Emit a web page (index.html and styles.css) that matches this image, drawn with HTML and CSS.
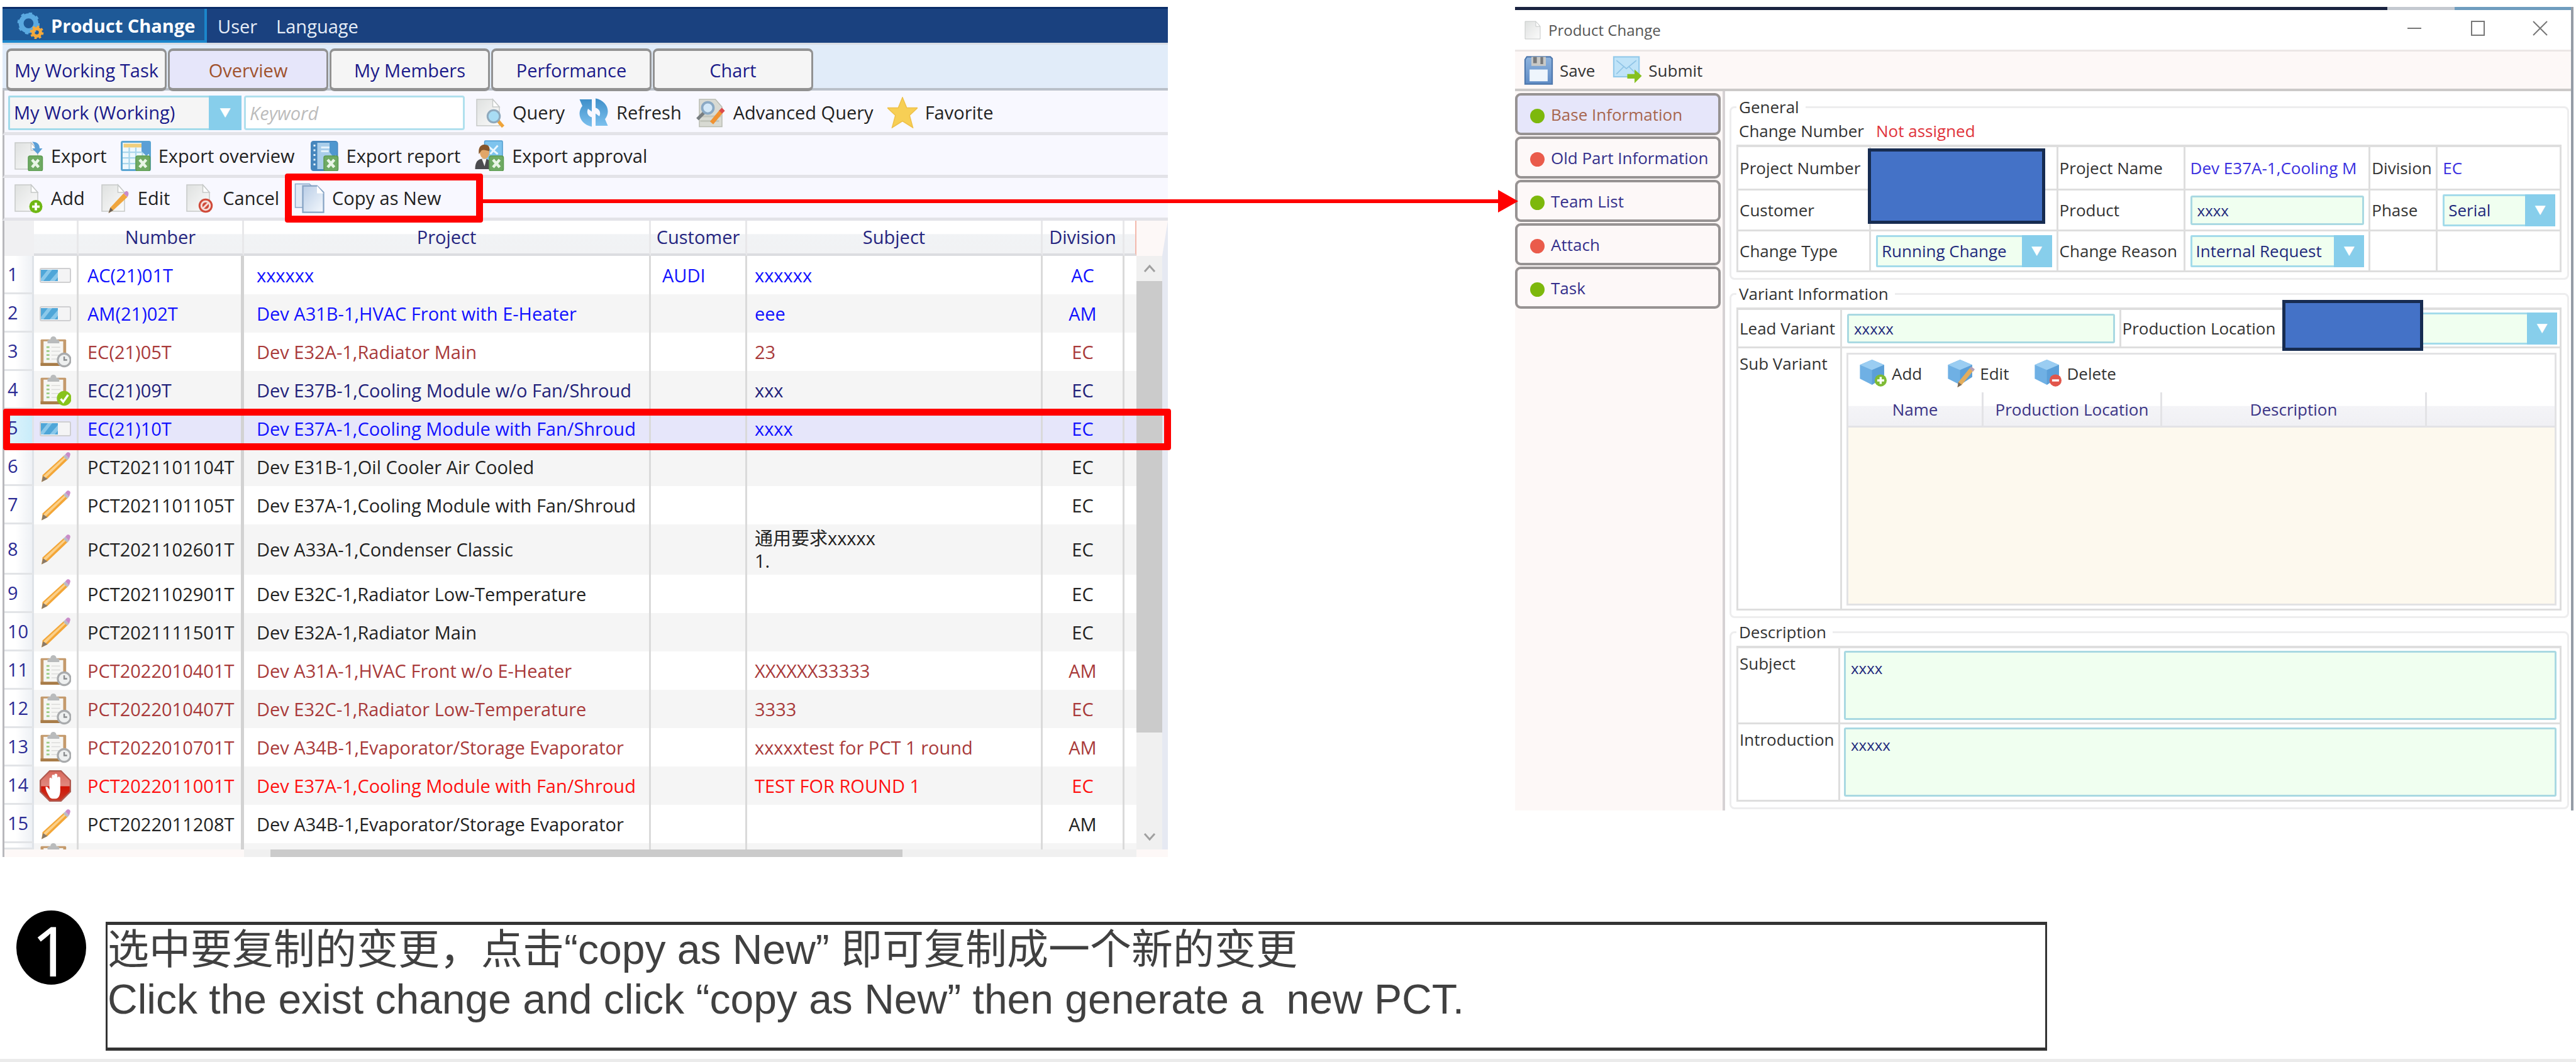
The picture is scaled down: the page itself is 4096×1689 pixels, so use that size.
FILE: index.html
```html
<!DOCTYPE html>
<html lang="en">
<head>
<meta charset="utf-8">
<title>Product Change - Copy as New</title>
<link rel="stylesheet" href="styles.css">
</head>
<body>
<svg class="sprite" aria-hidden="true">
  <defs>
    <linearGradient id="g-page" x1="0" y1="0" x2="1" y2="1"><stop offset="0" stop-color="#dfe1e0"/><stop offset="1" stop-color="#fbfbfb"/></linearGradient>
    <linearGradient id="g-blue" x1="0" y1="0" x2="0" y2="1"><stop offset="0" stop-color="#3f8fc9"/><stop offset="1" stop-color="#7cc0ee"/></linearGradient>
    <linearGradient id="g-copy" x1="0" y1="0" x2="1" y2="1"><stop offset="0" stop-color="#b9cde6"/><stop offset="1" stop-color="#f4f8fd"/></linearGradient>
    <linearGradient id="g-stop" x1="0" y1="0" x2="0" y2="1"><stop offset="0" stop-color="#d9695d"/><stop offset="0.5" stop-color="#e08a80"/><stop offset="0.52" stop-color="#d01405"/><stop offset="1" stop-color="#c83a28"/></linearGradient>
    <linearGradient id="g-floppy" x1="0" y1="0" x2="0" y2="1"><stop offset="0" stop-color="#8fb4de"/><stop offset="1" stop-color="#5f8cc6"/></linearGradient>
  </defs>
  <symbol id="page" viewBox="0 0 32 32"><path d="M2 2h17l7 8v20H2z" fill="url(#g-page)" stroke="#c6c9c8"/><path d="M19 2v8h7z" fill="#fff" stroke="#c6c9c8"/></symbol>
  <symbol id="xls" viewBox="0 0 32 32"><rect x="16" y="16" width="15" height="16" rx="2" fill="#6faa63" stroke="#5b9a50"/><path d="M20 20l7 8M27 20l-7 8" stroke="#e9f5e6" stroke-width="3"/></symbol>
  <symbol id="export" viewBox="0 0 32 32"><use href="#page"/><path d="M20 1c6 0 8 3 8 7h3l-5 6-6-6h3c0-3-1-5-3-7z" fill="#5b9fd6"/><use href="#xls"/></symbol>
  <symbol id="export-overview" viewBox="0 0 32 32"><rect x="1" y="1" width="30" height="30" rx="1" fill="#eef8fd" stroke="#5aa5d2" stroke-width="2"/><path d="M3 3h21v4H3z" fill="#f0cf7c"/><path d="M2 12h28M2 18h28M2 24h28M9 7v23M16 7v23M23 7v23" stroke="#a9d6ec" stroke-width="1.5"/><path d="M22 1h9v12l-4 3-5-5z" fill="#5b9fd6"/><use href="#xls"/></symbol>
  <symbol id="export-report" viewBox="0 0 32 32"><rect x="3" y="1" width="27" height="30" rx="2" fill="#a9cdea" stroke="#4686bd" stroke-width="2"/><path d="M3 1h6v30H3z" fill="#4686bd"/><path d="M5 5h2M5 10h2M5 15h2M5 20h2M5 25h2" stroke="#e4f1fa" stroke-width="2"/><path d="M13 7h11M13 11h8" stroke="#e4f1fa" stroke-width="2"/><path d="M22 1h8v13l-4 3-4-5z" fill="#4f97cf"/><use href="#xls"/></symbol>
  <symbol id="export-approval" viewBox="0 0 32 32"><rect x="11" y="0" width="19" height="24" rx="1" fill="#7ec4ee" stroke="#4f9ccf"/><path d="M15 6l10 8M25 5l-8 9" stroke="#eaf7ff" stroke-width="2"/><path d="M1 30c0-8 3-11 9-11s9 3 9 11z" fill="#4b4b4e"/><path d="M8 19h5l-2 8z" fill="#f2f2f2"/><ellipse cx="11" cy="12" rx="5" ry="7" fill="#e1a668"/><path d="M5 14c-1-7 2-10 6-10 5 0 6 4 5 7-3-1-6-2-8-1z" fill="#86562b"/><use href="#xls"/></symbol>
  <symbol id="query" viewBox="0 0 32 32"><use href="#page"/><path d="M24 24l6 7" stroke="#efa43a" stroke-width="3.5"/><circle cx="20" cy="20" r="6.5" fill="#a8dcf4" stroke="#8fa9bd" stroke-width="2"/></symbol>
  <symbol id="refresh" viewBox="0 0 32 32"><path d="M1 2h13v13l-4-3c-2 4 0 8 4 9v10C3 29-3 18 4 9z" fill="url(#g-blue)"/><path d="M31 30H18V17l4 3c2-4 0-8-4-9V1c11 2 17 13 10 22z" fill="url(#g-blue)"/></symbol>
  <symbol id="advanced" viewBox="0 0 32 32"><path d="M4 2h17l7 8v21H4z" fill="#d8dad3" stroke="#babdb4"/><path d="M5 20h22M5 25h20" stroke="#c3c6bd" stroke-width="2"/><path d="M10 15L2 23" stroke="#777d80" stroke-width="3.5"/><circle cx="13" cy="11" r="6" fill="#d3e8f8" stroke="#8aa9c4" stroke-width="2.5"/><path d="M17 27L27 15" stroke="#f09232" stroke-width="4.5"/><path d="M26.500 15.500l3-3" stroke="#dc4b4b" stroke-width="4.500"/></symbol>
  <symbol id="star" viewBox="0 0 32 32"><path d="M16 0l4.500 11H32l-8.500 8L27 32l-11-7-11 7 3.500-13L0 11h11.500z" fill="#f7cf55" stroke="#efc048"/></symbol>
  <symbol id="add" viewBox="0 0 32 32"><use href="#page"/><circle cx="24" cy="25" r="7" fill="#6fb714"/><path d="M24 21v8M20 25h8" stroke="#fff" stroke-width="2.500"/></symbol>
  <symbol id="pencil" viewBox="0 0 32 32"><path d="M3 24L25 4l4 4L8 28l-6 3z" fill="#f3a637"/><path d="M4 25L26 5l1 1.500L6 27z" fill="#fbd08a"/><path d="M2 31l1.500-6L8 28z" fill="#8a7a68"/><path d="M24 5l2-2 4 4-2 2z" fill="#b9bcc6"/><path d="M26 3l2-2c2-1 4 1 3 3l-1 3z" fill="#c98cc9"/></symbol>
  <symbol id="edit" viewBox="0 0 32 32"><use href="#page"/><path d="M11 26L25 11l4 4L14 29l-5 3z" fill="#f0a63e"/><path d="M9 32l2-6 3 3z" fill="#6d6258"/><path d="M25 11l2-2c2-1 4 1 3 4l-1 2z" fill="#c98cc9"/></symbol>
  <symbol id="cancel" viewBox="0 0 32 32"><use href="#page"/><circle cx="22" cy="24" r="7.500" fill="#d04a3a"/><circle cx="22" cy="24" r="4.500" fill="none" stroke="#f6dcd8" stroke-width="2"/><path d="M18.500 27.500l7-7" stroke="#f6dcd8" stroke-width="2"/></symbol>
  <symbol id="copy" viewBox="0 0 32 32"><path d="M1 1h15l5 5v20H1z" fill="#dfe9f5" stroke="#8ba8c9"/><path d="M9 3h15l7 7v21H9z" fill="url(#g-copy)" stroke="#86a3c4" stroke-width="1.500"/><path d="M24 3v8h7z" fill="#fff"/></symbol>
  <symbol id="progress" viewBox="0 0 50 26"><rect x="1" y="2" width="48" height="22" rx="2" fill="#f4f4f5" stroke="#cfcfd1" stroke-width="2"/><path d="M2 4h27v18H2z" fill="#4fa6d8"/><path d="M2 18L13 4h7L6 22H2zM16 22L29 7v9l-5 6z" fill="#8ac8ea"/></symbol>
  <symbol id="clipboard" viewBox="0 0 32 32"><rect x="1" y="3" width="26" height="27" rx="1" fill="#c49a6c"/><path d="M1 27h26v3H1z" fill="#a87c48"/><rect x="4" y="5" width="20" height="22" fill="#f6f6f4"/><path d="M7 11h3M7 15h3M7 19h3M7 23h3" stroke="#9ccc84" stroke-width="1.800"/><path d="M12 11h9M12 15h9M12 19h9M12 23h6" stroke="#dcdcda"/><path d="M8 7V4l3-1a3 3 0 0 1 6 0l3 1v3z" fill="#b9bbbc"/></symbol>
  <symbol id="waiting" viewBox="0 0 32 32"><use href="#clipboard"/><circle cx="25" cy="24" r="6.500" fill="#eef0f0" stroke="#a9abad" stroke-width="2"/><path d="M25 20.500V24h3" stroke="#8b8d8f" fill="none" stroke-width="1.500"/></symbol>
  <symbol id="done" viewBox="0 0 32 32"><use href="#clipboard"/><circle cx="25" cy="24" r="7.500" fill="#87c31c"/><path d="M21.500 24.500l2.500 3 5-7" fill="none" stroke="#fff" stroke-width="2.200"/></symbol>
  <symbol id="stop" viewBox="0 0 32 32"><path d="M10 0h12l10 10v12L22 32H10L0 22V10z" fill="#b05a50"/><path d="M10.500 1.500h11l9 9v11l-9 9h-11l-9-9v-11z" fill="url(#g-stop)"/><path d="M10 27c-2-3-4-7-4-10 2-1 3 1 4 3V9c0-2 2-2 2.500 0V6c0-2 2.500-2 2.500 0v-1c0-2 3-2 3 0v3c0-2 3-2 3 0v12c0 4-1 9-5 9-3 0-5 0-6-2z" fill="#fff"/></symbol>
  <symbol id="gears" viewBox="0 0 32 32"><circle cx="14" cy="13" r="9" fill="none" stroke="#5aa9e0" stroke-width="6"/><circle cx="14" cy="13" r="12" fill="none" stroke="#5aa9e0" stroke-width="3" stroke-dasharray="4 5.400"/><circle cx="24" cy="24" r="4.500" fill="none" stroke="#f4a93c" stroke-width="4"/><circle cx="24" cy="24" r="7" fill="none" stroke="#f4a93c" stroke-width="2.500" stroke-dasharray="2.800 2.700"/></symbol>
  <symbol id="save" viewBox="0 0 32 32"><path d="M3 1h26l2 2v28H1V4z" fill="url(#g-floppy)" stroke="#4f78ad" stroke-width="1.500"/><path d="M8 1h16v10H8z" fill="#c9c9c6"/><path d="M10 1h4v7h-4zM18 1h3v8h-3z" fill="#77797b"/><rect x="6" y="15" width="20" height="13" fill="#eef5fc"/></symbol>
  <symbol id="submit" viewBox="0 0 32 32"><rect x="1" y="1" width="28" height="22" fill="#bfe3f8" stroke="#93c9ea" stroke-width="1.500"/><path d="M4 5l11 9L26 5M4 20l8-8M26 20l-8-8" fill="none" stroke="#8fc4e6" stroke-width="1.200"/><path d="M16 20h8v-5l8 7-8 8v-5h-8z" fill="#86c11f"/></symbol>
  <symbol id="cube" viewBox="0 0 32 32"><path d="M15 0l14 6v14l-14 9L1 22V6z" fill="#6fb0e4"/><path d="M15 0l14 6-14 6L1 6z" fill="#9acdf2"/><path d="M15 12l14-6v14l-14 9z" fill="#5b9fd8"/></symbol>
  <symbol id="cube-add" viewBox="0 0 32 32"><use href="#cube"/><circle cx="25" cy="24" r="7" fill="#7fbb35"/><path d="M25 20v8M21 24h8" stroke="#fff" stroke-width="2.500"/></symbol>
  <symbol id="cube-edit" viewBox="0 0 32 32"><use href="#cube"/><path d="M13 26L26 10l4 3L17 29l-5 3z" fill="#e3ad5c"/><path d="M12 32l1-6 4 3z" fill="#776c60"/><path d="M26 10l2-2 4 3-2 3z" fill="#b7a0b4"/></symbol>
  <symbol id="cube-delete" viewBox="0 0 32 32"><use href="#cube"/><circle cx="25" cy="24" r="7" fill="#e2564b"/><path d="M21 24h8" stroke="#fff" stroke-width="2.500"/></symbol>
</svg>

<main class="slide">
  <div class="stage">
    <section class="overview" aria-label="Change overview">
      <nav class="menubar">
        <a class="menu-item active" href="#"><svg class="menu-icon"><use href="#gears"/></svg>Product Change</a>
        <a class="menu-item" href="#">User</a>
        <a class="menu-item" href="#">Language</a>
      </nav>
      <div class="tabs">
        <button class="tab" type="button">My Working Task</button>
        <button class="tab selected" type="button">Overview</button>
        <button class="tab" type="button">My Members</button>
        <button class="tab" type="button">Performance</button>
        <button class="tab" type="button">Chart</button>
      </div>
      <div class="toolbar search">
        <span class="select work"><select aria-label="Work list"><option>My Work (Working)</option></select></span>
        <input class="keyword" type="text" placeholder="Keyword" aria-label="Keyword">
        <button class="tool" type="button"><svg class="icon"><use href="#query"/></svg>Query</button>
        <button class="tool" type="button"><svg class="icon"><use href="#refresh"/></svg>Refresh</button>
        <button class="tool" type="button"><svg class="icon"><use href="#advanced"/></svg>Advanced Query</button>
        <button class="tool" type="button"><svg class="icon"><use href="#star"/></svg>Favorite</button>
      </div>
      <div class="toolbar exports">
        <button class="tool" type="button"><svg class="icon"><use href="#export"/></svg>Export</button>
        <button class="tool" type="button"><svg class="icon"><use href="#export-overview"/></svg>Export overview</button>
        <button class="tool" type="button"><svg class="icon"><use href="#export-report"/></svg>Export report</button>
        <button class="tool" type="button"><svg class="icon"><use href="#export-approval"/></svg>Export approval</button>
      </div>
      <div class="toolbar">
        <button class="tool" type="button"><svg class="icon"><use href="#add"/></svg>Add</button>
        <button class="tool" type="button"><svg class="icon"><use href="#edit"/></svg>Edit</button>
        <button class="tool" type="button"><svg class="icon"><use href="#cancel"/></svg>Cancel</button>
        <button class="tool marked" type="button"><svg class="icon"><use href="#copy"/></svg>Copy as New<span class="mark mark-button"></span></button>
      </div>
      <div class="grid">
        <table class="changes">
          <colgroup><col class="c-row"><col class="c-icon"><col class="c-number"><col class="c-project"><col class="c-customer"><col><col class="c-division"><col class="c-tail"></colgroup>
          <thead>
            <tr><th class="corner"></th><th></th><th>Number</th><th>Project</th><th>Customer</th><th>Subject</th><th>Division</th><th class="tail"></th></tr>
          </thead>
          <tbody>
            <tr class="blue"><th>1</th><td><svg class="state"><use href="#progress"/></svg></td><td>AC(21)01T</td><td>xxxxxx</td><td>AUDI</td><td>xxxxxx</td><td>AC</td><td></td></tr>
            <tr class="blue"><th>2</th><td><svg class="state"><use href="#progress"/></svg></td><td>AM(21)02T</td><td>Dev A31B-1,HVAC Front with E-Heater</td><td></td><td>eee</td><td>AM</td><td></td></tr>
            <tr class="brown"><th>3</th><td><svg class="state"><use href="#waiting"/></svg></td><td>EC(21)05T</td><td>Dev E32A-1,Radiator Main</td><td></td><td>23</td><td>EC</td><td></td></tr>
            <tr class="navy"><th>4</th><td><svg class="state"><use href="#done"/></svg></td><td>EC(21)09T</td><td>Dev E37B-1,Cooling Module w/o Fan/Shroud</td><td></td><td>xxx</td><td>EC</td><td></td></tr>
            <tr class="blue current"><th>5</th><td><svg class="state"><use href="#progress"/></svg></td><td>EC(21)10T</td><td>Dev E37A-1,Cooling Module with Fan/Shroud</td><td></td><td>xxxx</td><td>EC</td><td><span class="mark mark-row"></span></td></tr>
            <tr><th>6</th><td><svg class="state"><use href="#pencil"/></svg></td><td>PCT2021101104T</td><td>Dev E31B-1,Oil Cooler Air Cooled</td><td></td><td></td><td>EC</td><td></td></tr>
            <tr><th>7</th><td><svg class="state"><use href="#pencil"/></svg></td><td>PCT2021101105T</td><td>Dev E37A-1,Cooling Module with Fan/Shroud</td><td></td><td></td><td>EC</td><td></td></tr>
            <tr class="tall"><th>8</th><td><svg class="state"><use href="#pencil"/></svg></td><td>PCT2021102601T</td><td>Dev A33A-1,Condenser Classic</td><td></td><td>通用要求xxxxx<br>1.</td><td>EC</td><td></td></tr>
            <tr><th>9</th><td><svg class="state"><use href="#pencil"/></svg></td><td>PCT2021102901T</td><td>Dev E32C-1,Radiator Low-Temperature</td><td></td><td></td><td>EC</td><td></td></tr>
            <tr><th>10</th><td><svg class="state"><use href="#pencil"/></svg></td><td>PCT2021111501T</td><td>Dev E32A-1,Radiator Main</td><td></td><td></td><td>EC</td><td></td></tr>
            <tr class="brown"><th>11</th><td><svg class="state"><use href="#waiting"/></svg></td><td>PCT2022010401T</td><td>Dev A31A-1,HVAC Front w/o E-Heater</td><td></td><td>XXXXXX33333</td><td>AM</td><td></td></tr>
            <tr class="brown"><th>12</th><td><svg class="state"><use href="#waiting"/></svg></td><td>PCT2022010407T</td><td>Dev E32C-1,Radiator Low-Temperature</td><td></td><td>3333</td><td>EC</td><td></td></tr>
            <tr class="brown"><th>13</th><td><svg class="state"><use href="#waiting"/></svg></td><td>PCT2022010701T</td><td>Dev A34B-1,Evaporator/Storage Evaporator</td><td></td><td>xxxxxtest for PCT 1 round</td><td>AM</td><td></td></tr>
            <tr class="red"><th>14</th><td><svg class="state"><use href="#stop"/></svg></td><td>PCT2022011001T</td><td>Dev E37A-1,Cooling Module with Fan/Shroud</td><td></td><td>TEST FOR ROUND 1</td><td>EC</td><td></td></tr>
            <tr><th>15</th><td><svg class="state"><use href="#pencil"/></svg></td><td>PCT2022011208T</td><td>Dev A34B-1,Evaporator/Storage Evaporator</td><td></td><td></td><td>AM</td><td></td></tr>
            <tr class="cut"><th></th><td><div class="peek"><svg class="state"><use href="#clipboard"/></svg></div></td><td></td><td></td><td></td><td></td><td></td><td></td></tr>
          </tbody>
        </table>
        <div class="vscroll" aria-hidden="true">
          <svg class="chevron" viewBox="0 0 20 14"><path d="M2 12l8-9 8 9"/></svg>
          <div class="vthumb"></div>
          <svg class="chevron" viewBox="0 0 20 14"><path d="M2 2l8 9 8-9"/></svg>
        </div>
      </div>
      <div class="hscroll" aria-hidden="true"><div class="htrack"><div class="hthumb"></div></div></div>
    </section>

    <section class="dialog" aria-label="Product Change">
      <header class="titlebar">
        <svg class="doc-icon"><use href="#page"/></svg>
        <h1 class="title">Product Change</h1>
        <button class="win" type="button" aria-label="Minimize"><svg viewBox="0 0 24 28"><path d="M1 14h22"/></svg></button>
        <button class="win" type="button" aria-label="Maximize"><svg viewBox="0 0 24 28"><path d="M2 3h20v22H2z"/></svg></button>
        <button class="win" type="button" aria-label="Close"><svg viewBox="0 0 24 28"><path d="M1 3l22 22M23 3L1 25"/></svg></button>
      </header>
      <div class="actions">
        <button class="tool" type="button"><svg class="icon"><use href="#save"/></svg>Save</button>
        <button class="tool" type="button"><svg class="icon"><use href="#submit"/></svg>Submit</button>
      </div>
      <div class="workspace">
        <nav class="sidebar">
          <button class="side selected" type="button"><span class="dot ok"></span>Base Information</button>
          <button class="side" type="button"><span class="dot bad"></span>Old Part Information</button>
          <button class="side" type="button"><span class="dot ok"></span>Team List</button>
          <button class="side" type="button"><span class="dot bad"></span>Attach</button>
          <button class="side" type="button"><span class="dot ok"></span>Task</button>
        </nav>
        <form class="content">
          <fieldset>
            <legend>General</legend>
            <div class="change-number"><span class="cn-label">Change Number</span><output class="missing">Not assigned</output></div>
            <div class="form general">
              <div class="cell">Project Number</div>
              <div class="cell"></div>
              <div class="cell">Project Name</div>
              <div class="cell value">Dev E37A-1,Cooling M</div>
              <div class="cell">Division</div>
              <div class="cell value">EC</div>
              <div class="cell">Customer</div>
              <div class="cell"></div>
              <label class="cell" for="product">Product</label>
              <div class="cell"><input id="product" class="field" type="text" value="xxxx"></div>
              <label class="cell" for="phase">Phase</label>
              <div class="cell"><span class="select"><select id="phase"><option>Serial</option></select></span></div>
              <label class="cell" for="type">Change Type</label>
              <div class="cell"><span class="select"><select id="type"><option>Running Change</option></select></span></div>
              <label class="cell" for="reason">Change Reason</label>
              <div class="cell"><span class="select"><select id="reason"><option>Internal Request</option></select></span></div>
              <div class="cell"></div>
              <div class="cell"></div>
              <div class="redacted redacted-project"></div>
            </div>
          </fieldset>
          <fieldset>
            <legend>Variant Information</legend>
            <div class="form variant">
              <label class="cell" for="lead">Lead Variant</label>
              <div class="cell"><input id="lead" class="field" type="text" value="xxxxx"></div>
              <label class="cell open" for="location">Production Location</label>
              <div class="cell location"><span class="select"><select id="location"><option></option></select></span><div class="redacted redacted-location"></div></div>
              <div class="cell top">Sub Variant</div>
              <div class="cell sub">
                <div class="panel">
                  <div class="panel-tools">
                    <button class="tool" type="button"><svg class="icon"><use href="#cube-add"/></svg>Add</button>
                    <button class="tool" type="button"><svg class="icon"><use href="#cube-edit"/></svg>Edit</button>
                    <button class="tool" type="button"><svg class="icon"><use href="#cube-delete"/></svg>Delete</button>
                  </div>
                  <table class="variants">
                    <colgroup><col class="v-name"><col class="v-location"><col><col class="v-tail"></colgroup>
                    <thead><tr><th>Name</th><th>Production Location</th><th>Description</th><th></th></tr></thead>
                    <tbody><tr><td colspan="4"></td></tr></tbody>
                  </table>
                </div>
              </div>
            </div>
          </fieldset>
          <fieldset>
            <legend>Description</legend>
            <div class="form texts">
              <label class="cell top" for="subject">Subject</label>
              <div class="cell"><textarea id="subject" class="field">xxxx</textarea></div>
              <label class="cell top" for="intro">Introduction</label>
              <div class="cell"><textarea id="intro" class="field">xxxxx</textarea></div>
            </div>
          </fieldset>
        </form>
      </div>
    </section>
  </div>

  <div class="connector" aria-hidden="true"></div>

  <section class="note">
    <div class="badge">1</div>
    <div class="note-box">
      <p lang="zh">选中要复制的变更，点击“copy as New” 即可复制成一个新的变更</p>
      <p>Click the exist change and click “copy as New” then generate a&nbsp; new PCT.</p>
    </div>
  </section>
</main>
</body>
</html>
```
FILE: styles.css
```css
* { box-sizing: border-box; }

body {
  margin: 0;
  background: #fff;
  color: #222;
  font: 29px/36px "Open Sans", "Noto Sans", "Noto Sans CJK SC", sans-serif;
}

button, input, select, textarea { font: inherit; color: inherit; margin: 0; }
button { background: none; border: 0; padding: 0; }
p, h1 { margin: 0; font-weight: 400; }
.sprite { position: absolute; width: 0; height: 0; }

.slide {
  position: relative;
  min-height: 100vh;
  padding-top: 11px;
  border-bottom: 5px solid #ebebeb;
}

.stage {
  display: grid;
  grid-template-columns: minmax(0, 1853fr) minmax(0, 1683fr);
  column-gap: 552px;
  align-items: start;
  padding: 0 4px;
}

/* ---------- menu and tabs ---------- */
.menubar {
  display: flex;
  height: 57px;
  background: #1a417f;
  border-top: 3px solid #0a2c68;
  color: #e6edf7;
}
.menu-item {
  display: flex;
  align-items: center;
  padding: 2px 13px 0 0;
  margin-left: 17px;
  color: inherit;
  text-decoration: none;
}
.menu-item.active {
  margin-left: 0;
  width: 325px;
  padding: 4px 0 0 22px;
  background: #1e5997;
  border: solid #1b86cb;
  border-width: 0 4px 4px 0;
  color: #fff;
  font-weight: 700;
}
.menu-icon { width: 44px; height: 42px; margin-right: 11px; }

.tabs {
  display: flex;
  gap: 2px;
  height: 76px;
  padding: 6px 6px 0;
  background: #e1ecf9;
  border-top: 3px solid #d9dde4;
  border-bottom: 4px solid #b9c0c9;
}
.tab {
  flex: 0 1 255px;
  height: 68px;
  padding-top: 2px;
  border: solid #929292;
  border-width: 4px 3px 5px;
  border-radius: 8px;
  background: #f5f5f5;
  color: #1b1b8a;
  white-space: nowrap;
}
.tab.selected { background: #e6e6fa; color: #a0522d; }

/* ---------- toolbars ---------- */
.toolbar {
  display: flex;
  align-items: center;
  gap: 24px;
  height: 68px;
  padding-left: 14px;
  background: #f8f8ff;
  border-left: 3px solid #b8b8bc;
  border-bottom: 5px solid #e3e3e8;
}
.toolbar.search { height: 71px; gap: 22px; padding: 4px 0 0 6px; }
.toolbar.exports { gap: 22px; padding-top: 2px; }
.tool { display: flex; align-items: center; gap: 12px; white-space: nowrap; }
.icon { width: 48px; height: 50px; flex: none; }

.select { position: relative; display: block; width: 100%; height: 51px; }
.select select {
  appearance: none;
  display: block;
  width: 100%;
  height: 100%;
  padding: 0 50px 0 6px;
  border: 3px solid #a3dbea;
  border-radius: 2px;
  background: #f0fff0;
  color: #1f2a7c;
}
.select::after {
  content: "\25BC";
  position: absolute;
  top: 0;
  right: 0;
  bottom: 0;
  width: 48px;
  display: grid;
  place-items: center;
  background: #87ceeb;
  color: #fff;
  font-size: 18px;
  pointer-events: none;
}
.select.work { width: 371px; height: 55px; margin-right: -18px; }
.select.work select { background: #f5f5f5; color: #1b1b8a; }
.select.work::after { width: 52px; }
.keyword {
  width: 351px;
  height: 55px;
  margin-right: -6px;
  padding: 0 6px;
  border: 3px solid #b0e0ee;
  border-radius: 4px;
  background: #fff;
}
.keyword::placeholder { color: #bcbcbc; font-style: italic; opacity: 1; }

/* ---------- red annotations ---------- */
.mark { position: absolute; border: 11px solid #f00; border-radius: 4px; pointer-events: none; }
.marked { position: relative; }
.mark-button { inset: -14px -66px -14px -15px; }
.current { position: relative; }
.mark-row { inset: -1px -55px -4px -2px; z-index: 1; }
.connector {
  position: absolute;
  top: 317px;
  left: 765px;
  right: 41.7%;
  height: 6px;
  background: #f00;
}
.connector::after {
  content: "";
  position: absolute;
  right: -26px;
  top: -15px;
  border: solid transparent;
  border-width: 18px 0 18px 32px;
  border-left-color: #f00;
}

/* ---------- change list ---------- */
.grid { display: flex; border-left: 3px solid #b8b8bc; }
.changes { flex: 1; min-width: 0; border-collapse: separate; border-spacing: 0; table-layout: fixed; }
.c-row { width: 47px; }
.c-icon { width: 71px; }
.c-number { width: 263px; }
.c-project { width: 647px; }
.c-customer { width: 153px; }
.c-division { width: 130px; }
.c-tail { width: 19px; }

.changes th, .changes td { padding: 0; border-right: 3px solid #dadada; white-space: nowrap; }
.changes thead th {
  height: 56px;
  background: linear-gradient(#fff 40%, #f1f3f5 42%, #f1f2f4);
  border-bottom: 4px solid #dcdde0;
  border-right-color: #e8e8ea;
  color: #252580;
  font-weight: 400;
}
.changes thead .corner { background: #f0f0f2; border-color: #f0f0f2; }
.changes thead .tail { border-right: 2px solid #f3b9ad; }
.changes tbody tr { height: 61px; background: #fff; }
.changes tbody tr:nth-child(even) { background: #f5f5f5; }
.changes tbody .tall { height: 80px; }
.changes tbody .cut { height: 10px; }
.changes tbody th {
  padding-left: 5px;
  background: linear-gradient(90deg, #fff 40%, #eef1f5);
  border-bottom: 3px solid #e2e4e7;
  border-right-color: #dfe3e8;
  color: #2b2b94;
  font-weight: 400;
  text-align: left;
}
.changes tbody td:nth-child(2) { text-align: center; }
.changes tbody td:nth-child(3) { padding-left: 14px; border-right: 5px solid #d2d2d2; }
.changes tbody td:nth-child(4) { padding-left: 20px; }
.changes tbody td:nth-child(5) { padding-left: 18px; }
.changes tbody td:nth-child(6) { padding-left: 12px; }
.changes tbody td:nth-child(7) { text-align: center; }
.changes tbody td:nth-child(8) { border-right: 0; }
.changes tbody .current { background: #e6e6fa; }
.changes tbody .current th { background: linear-gradient(90deg, #e2f6fd, #c9ecfa); }
.blue td { color: #11f; }
.brown td { color: #a93a3a; }
.navy td { color: #22227a; }
.red td { color: #f11; }
.state { display: inline-block; width: 50px; height: 50px; vertical-align: middle; }
.peek { height: 10px; overflow: hidden; line-height: 0; }

.vscroll {
  display: flex;
  flex-direction: column;
  align-items: center;
  width: 50px;
  border-right: 9px solid #e6e9f2;
  border-top: 56px solid #fdf8f7;
  background: #f0f0f0;
}
.chevron { width: 20px; height: 14px; margin: 13px 0; fill: none; stroke: #a0a0a0; stroke-width: 3; }
.vthumb { width: 100%; height: 718px; margin-bottom: auto; background: #cbcbcb; }
.hscroll {
  height: 12px;
  padding: 0 50px 0 381px;
  border-left: 3px solid #b8b8bc;
  background: #fdf8f7;
}
.htrack { height: 100%; padding-left: 42px; background: #f0f0f0; }
.hthumb { width: 73%; height: 100%; background: #cbcbcb; }

/* ---------- dialog ---------- */
.dialog {
  padding-top: 5px;
  background: linear-gradient(90deg, #1a2340 82.6%, #c4c9d0 82.6%, #c4c9d0 89%, #6f9dbf 89%) top / 100% 5px no-repeat;
  border-right: 4px solid #959ca6;
  font-size: 26px;
  line-height: 32px;
  color: #333;
}
.titlebar {
  display: flex;
  align-items: center;
  height: 66px;
  padding-left: 14px;
  border-bottom: 3px solid #ece7e6;
  background: #fff;
}
.doc-icon { width: 32px; height: 34px; margin-right: 7px; }
.title { flex: 1; font-size: 24px; line-height: 32px; color: #555; }
.win { width: 101px; height: 60px; }
.win svg { width: 24px; height: 28px; fill: none; stroke: #777; stroke-width: 2; }
.win:last-child { width: 98px; }

.actions {
  display: flex;
  align-items: center;
  gap: 28px;
  height: 63px;
  padding-left: 14px;
  border-bottom: 4px solid #cbc9c8;
  background: #fdf8f7;
}
.actions .icon { height: 46px; width: 47px; }
.actions .tool { gap: 10px; }
.workspace { display: grid; grid-template-columns: 334px minmax(0, 1fr); }
.sidebar {
  display: flex;
  flex-direction: column;
  gap: 2px;
  padding: 3px 3px 0 0;
  background: #fdf8f7;
  border-right: 4px solid #d6d2d4;
}
.side {
  display: flex;
  align-items: center;
  gap: 10px;
  height: 67px;
  padding-left: 20px;
  border: 4px solid #979393;
  border-radius: 9px;
  background: #fdf8f8;
  color: #35308c;
  white-space: nowrap;
}
.side.selected { background: #e6e6fa; color: #a8674f; }
.dot { width: 23px; height: 23px; margin-top: 6px; border-radius: 50%; }
.dot.ok { background: #7db80c; }
.dot.bad { background: #ea5b4b; }

.content { padding: 9px 3px 2px 7px; background: #fff; }
fieldset {
  min-width: 0;
  margin: 0 0 6px;
  padding: 0 9px 9px 8px;
  border: 3px solid #ededee;
  border-radius: 8px;
}
fieldset:last-child { margin-bottom: 0; }
legend { padding: 0 10px 0 4px; }
.change-number { display: flex; align-items: center; height: 44px; padding-left: 4px; }
.cn-label { width: 218px; }
.missing { color: #e0333b; }

.form { position: relative; display: grid; border: solid #dedede; border-width: 4px 0 0 3px; }
.general {
  grid-template-columns: 211px minmax(0, 298fr) 202px minmax(0, 295fr) 107px minmax(0, 197fr);
  grid-template-rows: 69px 65px 65px;
}
.variant {
  margin-top: 6px;
  grid-template-columns: 165px minmax(0, 444fr) 256px minmax(0, 445fr);
  grid-template-rows: 61px 417px;
}
.texts {
  margin-top: 6px;
  grid-template-columns: 162px minmax(0, 1fr);
  grid-template-rows: 121px 123px;
}
.cell {
  display: flex;
  align-items: center;
  padding: 0 7px 0 8px;
  border: solid #dedede;
  border-width: 0 3px 3px 0;
  white-space: nowrap;
  overflow: hidden;
}
.cell:nth-child(odd) { padding: 0 0 0 2px; }
.cell.open { border-right: 0; }
.cell.location { position: relative; overflow: visible; padding-right: 4px; }
.cell.value { color: #3a2fe0; }
.cell.top { align-items: flex-start; padding-top: 8px; }
.field {
  display: block;
  width: 100%;
  height: 47px;
  padding: 0 8px;
  border: 3px solid #a9d9e2;
  border-radius: 3px;
  background: #f0fff0;
  color: #1f2a7c;
  font-size: 24px;
}
textarea.field { height: 110px; padding-top: 9px; resize: none; overflow: hidden; }
.texts .cell:nth-child(even) { padding: 0 5px 0 6px; }

.redacted { position: absolute; background: #4472c7; border: 5px solid #172c51; }
.redacted-project { left: 206px; top: 2px; width: 282px; height: 120px; }
.redacted-location { left: 0; top: -16px; width: 224px; height: 81px; }

.cell.sub { grid-column: 2 / -1; align-items: stretch; padding: 7px 5px 5px 7px; }
.panel { display: flex; flex-direction: column; width: 100%; border: 3px solid #e2e2e4; }
.panel-tools { display: flex; gap: 40px; height: 60px; padding: 8px 0 0 17px; }
.panel-tools .icon { width: 44px; height: 44px; }
.panel-tools .tool { gap: 8px; align-self: flex-start; }
.variants { flex: 1; width: 100%; border-collapse: separate; border-spacing: 0; table-layout: fixed; }
.v-name { width: 215px; }
.v-location { width: 284px; }
.v-tail { width: 203px; }
.variants th {
  height: 56px;
  padding: 0;
  border: solid #e3e3e6;
  border-width: 0 3px 3px 0;
  background: linear-gradient(#fff 40%, #f4f4f7 42%, #f0f0f4);
  color: #3b3486;
  font-weight: 400;
}
.variants th:last-child { border-right: 0; }
.variants td { height: 280px; background: #fdf9ee; }

/* ---------- note ---------- */
.note {
  display: flex;
  align-items: flex-start;
  gap: 31px;
  padding: 85px 0 13px 26px;
  font: 66px/79px "Liberation Sans", "Noto Sans CJK SC", sans-serif;
  color: #404040;
}
.badge {
  flex: none;
  width: 111px;
  height: 118px;
  border-radius: 50%;
  background: #000;
  color: #fff;
  font: 110px/124px "Noto Sans", sans-serif;
  text-align: center;
}
.note-box {
  flex: 0 1 3087px;
  height: 205px;
  margin-top: 18px;
  border: solid #333;
  border-width: 5px 3px;
}
```
